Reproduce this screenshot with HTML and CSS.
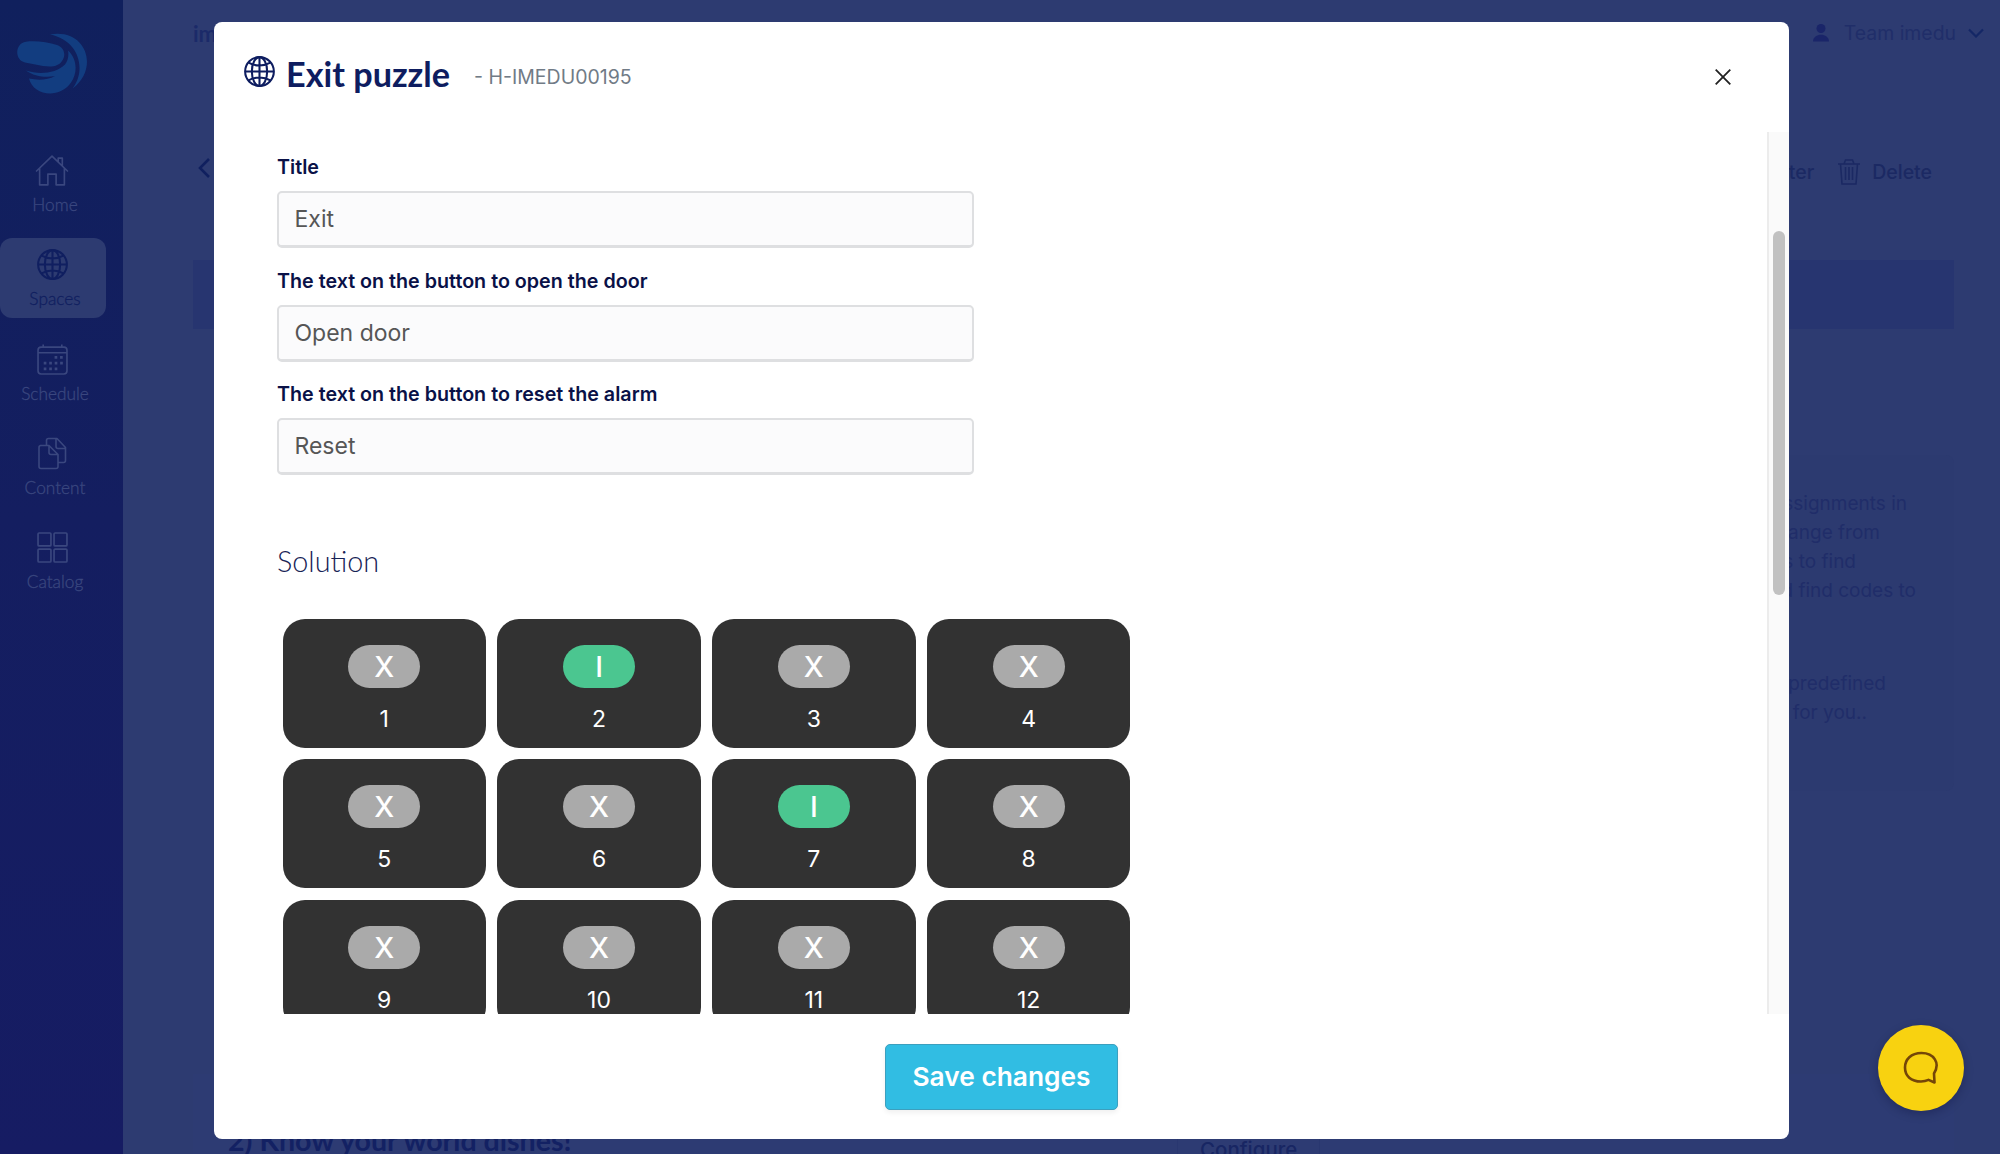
FILE: index.html
```html
<!DOCTYPE html>
<html lang="en">
<head>
<meta charset="utf-8">
<title>Exit puzzle</title>
<link rel="stylesheet" href="styles.css">
</head>
<body>
<svg class="defs" width="0" height="0">
  <symbol id="globe" viewBox="0 0 30 30"><g fill="none" stroke="currentColor" stroke-width="2"><circle cx="15" cy="15" r="13.900"/><ellipse cx="15" cy="15" rx="7.400" ry="13.900"/><path d="M15 1v28M1 15h28M4.500 6.500c6 3.500 15 3.500 21 0M4.500 23.500c6-3.500 15-3.500 21 0"/></g></symbol>
</svg>
<div class="app">
  <nav class="sidebar">
    <svg class="logo" viewBox="0 0 70 61" width="70" height="61"><g fill="#123d80"><path d="M9 8.700C18 7.500 31 9 40 12c8 3 9 11 5 16-4 6-11 6-19 5L8 29.500C-3 27-2 10 9 8.700z"/><path d="M9 37.500c13 4.500 30 3 39-6 3-4 4-9 3-14 9 8 10 22 3 32-12 17-38 13-42-4 9 2 19 1.500 26-2.500-9 2-21 .5-29-5.500z"/><path d="M33 1.500C69-5 83 35 55.500 55.500 70 37 62 7 33 1.500z"/></g></svg>
    <a class="nav-item"><svg viewBox="0 0 32 32" width="34" height="32"><g fill="none" stroke="currentColor" stroke-width="1.600" stroke-linejoin="round" stroke-linecap="round"><path d="M1 16.500L16 2l15 14.500M4 14v16h8V19.500h8V30h8V14M22 7.500V4h4v7.500"/></g></svg><span>Home</span></a>
    <a class="nav-item active"><svg width="31" height="31"><use href="#globe"/></svg><span>Spaces</span></a>
    <a class="nav-item"><svg viewBox="0 0 30 30" width="31" height="31"><g fill="none" stroke="currentColor" stroke-width="1.600"><rect x="1" y="3" width="28" height="26" rx="3"/><path d="M1 8.500h28M6 .5v3M24 .5v3"/></g><path stroke="currentColor" stroke-width="2.600" stroke-dasharray="2.600 2.700" d="M17 13h8M6.500 18.500H25M6.500 24H20"/></svg><span>Schedule</span></a>
    <a class="nav-item"><svg viewBox="0 0 30 32" width="30" height="33"><g fill="none" stroke="currentColor" stroke-width="1.600" stroke-linejoin="round"><path d="M3 8h9l9 9v12q0 2-2 2H4q-2 0-2-2V10q0-2 2-2M12 8v7q0 2 2 2h7M9.500 8V3q0-2 2-2H20l8.500 9v13q0 2-2 2H21M19 1v8q0 2 2 2h8"/></g></svg><span>Content</span></a>
    <a class="nav-item"><svg viewBox="0 0 30 30" width="31" height="31"><g fill="none" stroke="currentColor" stroke-width="1.600"><rect x="1" y="1" width="12.500" height="12.500" rx="1"/><rect x="16.500" y="1" width="12.500" height="12.500" rx="1"/><rect x="1" y="16.500" width="12.500" height="12.500" rx="1"/><rect x="16.500" y="16.500" width="12.500" height="12.500" rx="1"/></g></svg><span>Catalog</span></a>
  </nav>
  <main class="page">
    <header class="topbar"><strong>imedu</strong>
      <div class="team"><svg viewBox="0 0 18 20" width="18" height="20"><circle cx="9" cy="5.500" r="4.500" fill="currentColor"/><path fill="currentColor" d="M1 18.500c0-9 16-9 16 0z"/></svg><span>Team imedu</span><svg class="chev" viewBox="0 0 16 10" width="16" height="10"><path d="M1 1.500l7 7 7-7" fill="none" stroke="currentColor" stroke-width="2.200"/></svg></div>
    </header>
    <div class="actions"><svg viewBox="0 0 12 20" width="12" height="20"><path d="M11 1L2 10l9 9" fill="none" stroke="currentColor" stroke-width="2.600"/></svg>
      <div class="right"><span>Filter</span><svg viewBox="0 0 22 26" width="22" height="26"><g fill="none" stroke="currentColor" stroke-width="1.600"><path d="M0 5h22M6 5l1.500-4h7L16 5M2.500 5L4 25h14l1.500-20M7.500 8v13M11 8v13M14.500 8v13"/></g></svg><span>Delete</span></div>
    </div>
    <div class="banner"></div>
    <section class="info">
      <p><span class="end-a">Add assignments in</span><span class="end-b">that range from</span><span class="end-c">puzzles to find</span><span class="end-d">and find codes to</span></p>
      <p><span class="end-e">Use predefined</span><span class="end-f">made for you..</span></p>
    </section>
    <section class="row"></section>
    <section class="row last"><h2>2) Know your world dishes!</h2><span class="configure">Configure</span></section>
  </main>
</div>
<div class="modal">
  <header class="modal-head">
    <svg class="globe" width="31" height="31"><use href="#globe"/></svg>
    <h1>Exit puzzle</h1><span class="code">- H-IMEDU00195</span>
    <svg class="close" viewBox="0 0 16 16" width="16" height="16"><path d="M.7.7l14.600 14.600M15.300.7L.7 15.300" stroke="#222" stroke-width="1.800"/></svg>
  </header>
  <div class="modal-body">
    <div class="form">
      <label>Title</label><div class="input">Exit</div>
      <label>The text on the button to open the door</label><div class="input">Open door</div>
      <label>The text on the button to reset the alarm</label><div class="input">Reset</div>
      <h3>Solution</h3>
      <div class="grid">
        <div class="card"><b>X</b><span>1</span></div><div class="card on"><b>I</b><span>2</span></div><div class="card"><b>X</b><span>3</span></div><div class="card"><b>X</b><span>4</span></div>
        <div class="card"><b>X</b><span>5</span></div><div class="card"><b>X</b><span>6</span></div><div class="card on"><b>I</b><span>7</span></div><div class="card"><b>X</b><span>8</span></div>
        <div class="card"><b>X</b><span>9</span></div><div class="card"><b>X</b><span>10</span></div><div class="card"><b>X</b><span>11</span></div><div class="card"><b>X</b><span>12</span></div>
      </div>
    </div>
    <div class="track"><div class="thumb"></div></div>
  </div>
  <footer class="modal-foot"><button class="save">Save changes</button></footer>
</div>
<div class="chat"><svg viewBox="0 0 36 34" width="36" height="34"><path d="M31 22.500C37.500 12 31 2 18.500 2 8 2 2 8.500 2 16.500 2 25 8 30.500 18 30.500c3 0 5-.4 7.500-1.600L31.500 31.500z" fill="none" stroke="#744608" stroke-width="2.600" stroke-linejoin="round"/></svg></div>
</body>
</html>
```
FILE: styles.css
```css
* { box-sizing: border-box; }
body { margin: 0; width: 2000px; height: 1154px; overflow: hidden; position: relative; font-family: Inter, sans-serif; background: #2d3b71; }
h1, h2, h3, p { margin: 0; }
.defs { display: block; }
.app { display: flex; height: 1154px; overflow: hidden; color: #202e6c; }

.sidebar { width: 123px; flex: none; background: linear-gradient(#10205d, #141e60 45%, #161c63); padding-top: 33px; color: #3a477f; }
.logo { display: block; margin: 0 0 50px 17px; }
.nav-item { display: flex; flex-direction: column; align-items: center; width: 106px; height: 80px; margin-bottom: 14.300px; padding-top: 10px; font: 300 17.300px/22px Lato, sans-serif; }
.nav-item svg { height: 33px; flex: none; margin-right: 2px; }
.nav-item span { margin: 7px 0 0 4px; white-space: nowrap; -webkit-text-stroke: .3px currentColor; }
.nav-item.active { background: #2d3b71; border-radius: 12px; color: #101f60; }

.page { flex: 1; padding: 0 46px 0 70px; }
.topbar { display: flex; justify-content: space-between; align-items: center; height: 66px; font-size: 19.400px; margin-right: -30px; }
.topbar strong { font: 700 22px Lato, sans-serif; color: #1b2a69; }
.team { display: flex; align-items: center; gap: 14px; color: #1a2569; }
.team span { color: #202e69; }
.team .chev { color: #142766; margin-left: -2px; }
.actions { display: flex; align-items: center; height: 64px; margin: 74px 22px 0 5px; font-size: 19.500px; font-weight: 500; justify-content: space-between; color: #1b2963; }
.actions > svg { margin-top: -9px; color: #10205f; }
.right { display: flex; align-items: center; gap: 12px; }
.right svg { margin-left: 12px; }
.banner { height: 69px; margin-top: 56px; background: #273570; }
.info { height: 336px; margin-top: 126px; width: 262px; margin-left: auto; padding: 34px 0 0; background: #2c3a70; border-radius: 8px; font-size: 19px; line-height: 29px; color: #202d69; white-space: nowrap; text-align: right; }
.info p { margin-bottom: 64px; }
.info span { display: block; }
.end-a { margin-right: 47px; }
.end-b { margin-right: 74px; }
.end-c { margin-right: 98px; }
.end-d { margin-right: 38px; }
.end-e { margin-right: 68px; }
.end-f { margin-right: 87px; }
.row { height: 283px; }
.row.last { display: flex; align-items: flex-start; height: 120px; padding: 46px 0 0 35px; background: #2d3b73; }
.row.last h2 { width: 949px; font: 700 28.600px/40px Lato, sans-serif; color: #132163; }
.configure { border: 1px solid #293770; border-radius: 4px; padding: 14px 22px; margin: 3px 0 0 0; font-size: 20.500px; line-height: 24px; font-weight: 500; color: #182663; }

.modal { position: absolute; left: 214px; top: 22px; width: 1575px; height: 1117px; display: flex; flex-direction: column; border-radius: 8px; background: #fff; overflow: hidden; }
.modal-head { height: 110px; flex: none; display: flex; align-items: flex-start; padding: 34px 58px 0 30px; color: #0e1d60; }
.modal-head h1 { margin: -4px 0 0 11px; font: 700 34.200px/44px Lato, sans-serif; white-space: nowrap; }
.code { margin: 8px 0 0 24px; font-size: 19.500px; line-height: 26px; color: #717b86; white-space: nowrap; }
.close { margin: 13px 0 0 auto; }
.modal-body { height: 882px; display: flex; overflow: hidden; }
.form { flex: 1; padding: 22px 0 0 63px; }
label { display: block; padding-top: 1px; font-size: 19.700px; font-weight: 600; line-height: 25px; color: #0a1147; white-space: nowrap; }
.input { width: 697px; height: 57px; margin: 11px 0 19.500px; padding: 0 15.500px; border: 2px solid #dedfe1; border-bottom-width: 3px; border-radius: 5px; background: #fbfbfc; color: #565656; font-size: 23px; line-height: 52px; }
h3 { margin-top: 66px; font: 300 28.800px/40px Lato, sans-serif; color: #172356; }
.grid { display: grid; grid-template-columns: repeat(4, 203.500px); grid-auto-rows: 129px; gap: 11.300px; margin: 38px 0 0 5.500px; }
.card { display: flex; flex-direction: column; align-items: center; padding-top: 26px; border-radius: 22px; background: #323232; color: #fff; }
.card b { width: 72px; height: 43px; border-radius: 22px; background: #aaa; font-size: 28.500px; font-weight: 500; line-height: 43px; text-align: center; }
.card.on b { background: #4bc690; }
.card span { margin-top: 17px; font-size: 23px; line-height: 28px; }
.track { width: 22px; border-left: 2px solid #ececec; background: #fafafa; padding: 99px 0 0 4px; }
.thumb { width: 12px; height: 364px; border-radius: 6px; background: #c1c1c1; }
.modal-foot { flex: 1; display: flex; justify-content: center; align-items: flex-start; padding-top: 30px; }
.save { width: 233px; height: 66px; padding: 0; border: 1px solid #3c9fbe; border-radius: 5px; background: #31bde3; color: #fff; font: 600 26.300px/62px Inter, sans-serif; box-shadow: 0 3px 5px rgba(0, 0, 0, .06); }
.chat { position: absolute; left: 1878px; top: 1025px; width: 86px; height: 86px; border-radius: 50%; background: #f8d210; display: flex; align-items: center; justify-content: center; box-shadow: 0 3px 10px rgba(0, 0, 40, .25); }
```
